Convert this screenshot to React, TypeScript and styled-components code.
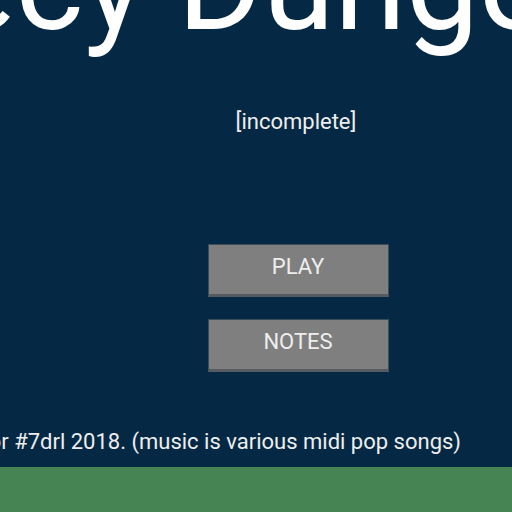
import React from "react";
import styled, { createGlobalStyle } from "styled-components";

const Global = createGlobalStyle`
  html, body {
    margin: 0;
    padding: 0;
    background: #052944;
    overflow: hidden;
  }
  body {
    font-family: Roboto, "Liberation Sans", sans-serif;
    color: #ffffff;
  }
`;

const Screen = styled.div`
  width: 512px;
  height: 512px;
  display: flex;
  flex-direction: column;
  overflow: hidden;
`;

const Main = styled.main`
  flex: 1;
  width: 596px;
  display: flex;
  flex-direction: column;
  align-items: center;
`;

const Title = styled.h1`
  margin: -80px 299px 0 0;
  font-family: Roboto, "Liberation Sans", sans-serif;
  font-weight: 400;
  font-size: 130px;
  line-height: 1;
  white-space: nowrap;
  color: #ffffff;
`;

const Status = styled.p`
  margin: 59px 4px 0 0;
  font-size: 22px;
  line-height: 26px;
  color: #eeeeee;
`;

const Menu = styled.nav`
  margin-top: 109px;
  display: flex;
  flex-direction: column;
  gap: 22px;
`;

const MenuButton = styled.button`
  width: 181px;
  height: 53px;
  box-sizing: border-box;
  display: flex;
  align-items: center;
  justify-content: center;
  background: #7f7f7f;
  border: 1px solid #3c4d5a;
  border-bottom: 3px solid #555b60;
  color: #eeeeee;
  font-family: Roboto, "Liberation Sans", sans-serif;
  font-size: 22px;
  padding: 0 0 6px;
  cursor: pointer;
`;

const Credits = styled.p`
  margin: 0;
  padding: 0 51px 12px 0;
  width: 512px;
  box-sizing: border-box;
  display: flex;
  justify-content: flex-end;
  white-space: nowrap;
  font-size: 22px;
  line-height: 26px;
  color: #eeeeee;
`;

const FooterBar = styled.footer`
  height: 45px;
  background: #478454;
  flex-shrink: 0;
`;

export default function App() {
  return (
    <>
      <Global />
      <Screen>
        <Main>
          <Title>Prophecy Dungeon</Title>
          <Status>[incomplete]</Status>
          <Menu>
            <MenuButton>PLAY</MenuButton>
            <MenuButton>NOTES</MenuButton>
          </Menu>
        </Main>
        <Credits>Made by a developer for #7drl 2018. (music is various midi pop songs)</Credits>
        <FooterBar />
      </Screen>
    </>
  );
}
